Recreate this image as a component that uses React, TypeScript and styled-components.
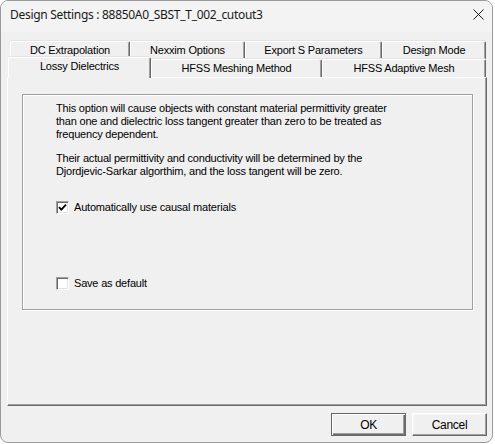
import React from "react";
import styled, { createGlobalStyle } from "styled-components";

const GlobalStyle = createGlobalStyle`
  html, body {
    margin: 0;
    padding: 0;
    background: #ffffff;
  }
  * {
    box-sizing: border-box;
  }
`;

const backTabs = [
  { label: "DC Extrapolation", width: 120 },
  { label: "Nexxim Options", width: 115 },
  { label: "Export S Parameters", width: 137 },
  { label: "Design Mode", width: 104 },
];

const frontTabs = [
  { label: "Lossy Dielectrics", width: 143, selected: true },
  { label: "HFSS Meshing Method", width: 171 },
  { label: "HFSS Adaptive Mesh", width: 164 },
];

export default function App() {
  return (
    <>
      <GlobalStyle />
      <Window>
        <TitleBar>
          <Title>Design Settings : 88850A0_SBST_T_002_cutout3</Title>
          <CloseButton aria-label="Close">
            <svg width="11" height="11" viewBox="0 0 11 11">
              <path d="M0.5 0.5 L10.5 10.5 M10.5 0.5 L0.5 10.5" stroke="#1a1a1a" strokeWidth="1" fill="none" />
            </svg>
          </CloseButton>
        </TitleBar>

        <Body>
          <TabControl>
            <TabRow $inset={3}>
              {backTabs.map((t) => (
                <Tab key={t.label} $width={t.width}>{t.label}</Tab>
              ))}
            </TabRow>
            <TabRow $inset={1}>
              {frontTabs.map((t) => (
                <Tab key={t.label} $width={t.width} $selected={t.selected}>
                  {t.label}
                </Tab>
              ))}
            </TabRow>
            <Panel>
              <GroupBox>
                <Paragraph>
                  This option will cause objects with constant material permittivity greater<br />
                  than one and dielectric loss tangent greater than zero to be treated as<br />
                  frequency dependent.
                </Paragraph>
                <Paragraph $gap={11}>
                  Their actual permittivity and conductivity will be determined by the<br />
                  Djordjevic-Sarkar algorthim, and the loss tangent will be zero.
                </Paragraph>
                <CheckRow $gap={23}>
                  <CheckBox>
                    <svg width="9" height="9" viewBox="0 0 9 9">
                      <path d="M1 4.2 L3.3 6.6 L8 1.6" stroke="#000" strokeWidth="1.8" fill="none" />
                    </svg>
                  </CheckBox>
                  Automatically use causal materials
                </CheckRow>
                <CheckRow $gap={63}>
                  <CheckBox />
                  Save as default
                </CheckRow>
              </GroupBox>
            </Panel>
          </TabControl>

          <ButtonRow>
            <Button $default>OK</Button>
            <Button>Cancel</Button>
          </ButtonRow>
        </Body>
      </Window>
    </>
  );
}

const Window = styled.div`
  width: 493px;
  height: 443px;
  display: flex;
  flex-direction: column;
  background: #f0f0f0;
  border: 1px solid #9a9a9a;
  border-radius: 8px;
  overflow: hidden;
  font-family: "Liberation Sans", Arial, sans-serif;
  font-size: 11px;
  letter-spacing: -0.2px;
  color: #000;
`;

const TitleBar = styled.div`
  height: 31px;
  flex: none;
  display: flex;
  align-items: center;
  justify-content: space-between;
  padding: 0 3px 4px 9px;
  background: #f3f3f3;
`;

const Title = styled.span`
  font-family: "Noto Sans", "Open Sans", sans-serif;
  font-size: 12px;
  letter-spacing: -0.3px;
  color: #1a1a1a;
`;

const CloseButton = styled.span`
  display: flex;
  align-items: center;
  justify-content: center;
  width: 22px;
  height: 22px;
`;

const Body = styled.div`
  flex: 1;
  display: flex;
  flex-direction: column;
  padding: 9px 5px 0 6px;
`;

const TabControl = styled.div`
  width: 480px;
  display: flex;
  flex-direction: column;
`;

const TabRow = styled.div<{ $inset: number }>`
  height: 18px;
  display: flex;
  align-items: flex-end;
  padding-left: ${(p) => p.$inset}px;
`;

const Tab = styled.div<{ $width: number; $selected?: boolean }>`
  position: relative;
  width: ${(p) => p.$width}px;
  height: ${(p) => (p.$selected ? 21 : 18)}px;
  margin-top: ${(p) => (p.$selected ? -2 : 0)}px;
  margin-bottom: ${(p) => (p.$selected ? -1 : 0)}px;
  z-index: ${(p) => (p.$selected ? 2 : 0)};
  display: flex;
  align-items: center;
  justify-content: center;
  padding-bottom: ${(p) => (p.$selected ? 4 : 1)}px;
  background: #f0f0f0;
  border-top: 1px solid #ffffff;
  border-left: 1px solid #ffffff;
  border-right: 1px solid #696969;
  border-radius: 2px 2px 0 0;
  box-shadow: inset -1px 0 0 #a0a0a0, 0 -1px 0 #e3e3e3;
  white-space: nowrap;
`;

const Panel = styled.div`
  position: relative;
  z-index: 1;
  height: 329px;
  padding: 16px 0 0 14px;
  border-top: 1px solid #ffffff;
  border-left: 1px solid #ffffff;
  border-right: 1px solid #696969;
  border-bottom: 1px solid #696969;
  box-shadow: inset -1px -1px 0 #a0a0a0;
`;

const GroupBox = styled.div`
  width: 451px;
  height: 216px;
  padding: 7px 0 0 33px;
  border: 1px solid #a0a0a0;
  box-shadow: 1px 1px 0 #ffffff, inset 1px 1px 0 #ffffff;
`;

const Paragraph = styled.p<{ $gap?: number }>`
  margin: ${(p) => p.$gap ?? 0}px 0 0;
  line-height: 13px;
`;

const CheckRow = styled.label<{ $gap: number }>`
  display: flex;
  align-items: center;
  gap: 5px;
  height: 13px;
  margin-top: ${(p) => p.$gap}px;
  line-height: 13px;
`;

const CheckBox = styled.span`
  width: 13px;
  height: 13px;
  flex: none;
  display: flex;
  align-items: center;
  justify-content: center;
  background: #ffffff;
  border-top: 1px solid #a0a0a0;
  border-left: 1px solid #a0a0a0;
  border-right: 1px solid #ffffff;
  border-bottom: 1px solid #ffffff;
  box-shadow: inset 1px 1px 0 #696969, inset -1px -1px 0 #e3e3e3;
`;

const ButtonRow = styled.div`
  width: 480px;
  display: flex;
  justify-content: flex-end;
  gap: 6px;
  margin-top: 7px;
`;

const Button = styled.div<{ $default?: boolean }>`
  width: 75px;
  height: 23px;
  display: flex;
  align-items: center;
  justify-content: center;
  font-size: 12px;
  letter-spacing: -0.3px;
  background: #f0f0f0;
  border: 1px solid ${(p) => (p.$default ? "#646464" : "#ffffff")};
  border-right-color: #696969;
  border-bottom-color: #696969;
  box-shadow: ${(p) =>
    p.$default
      ? "inset 1px 1px 0 #ffffff, inset -1px -1px 0 #696969, inset -2px -2px 0 #a0a0a0"
      : "inset -1px -1px 0 #a0a0a0, inset 1px 1px 0 #f8f8f8"};
`;
